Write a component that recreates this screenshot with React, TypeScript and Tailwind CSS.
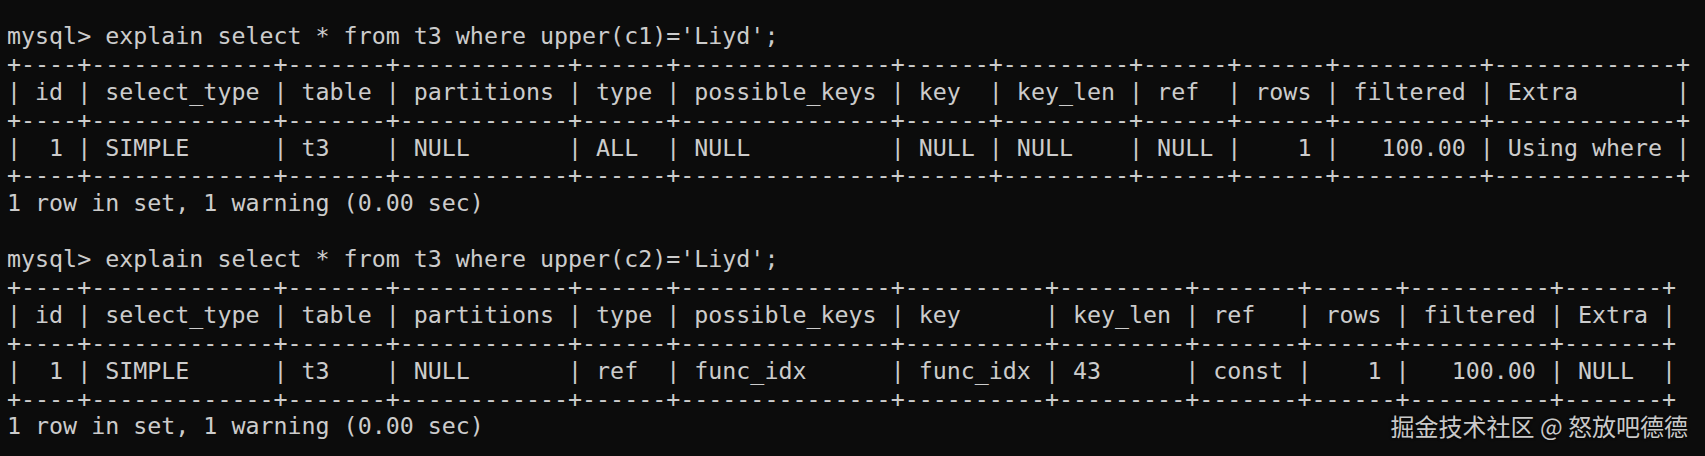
const border1 =
  "+----+-------------+-------+------------+------+---------------+------+---------+------+------+----------+-------------+";
const border2 =
  "+----+-------------+-------+------------+------+---------------+----------+---------+-------+------+----------+-------+";

const lines = [
  "mysql> explain select * from t3 where upper(c1)='Liyd';",
  border1,
  "| id | select_type | table | partitions | type | possible_keys | key  | key_len | ref  | rows | filtered | Extra       |",
  border1,
  "|  1 | SIMPLE      | t3    | NULL       | ALL  | NULL          | NULL | NULL    | NULL |    1 |   100.00 | Using where |",
  border1,
  "1 row in set, 1 warning (0.00 sec)",
  "",
  "mysql> explain select * from t3 where upper(c2)='Liyd';",
  border2,
  "| id | select_type | table | partitions | type | possible_keys | key      | key_len | ref   | rows | filtered | Extra |",
  border2,
  "|  1 | SIMPLE      | t3    | NULL       | ref  | func_idx      | func_idx | 43      | const |    1 |   100.00 | NULL  |",
  border2,
  "1 row in set, 1 warning (0.00 sec)",
];

export default function App() {
  return (
    <div className="relative h-[456px] w-full overflow-hidden bg-[#0c0c0c]">
      {/* terminal output */}
      <pre className="m-0 pl-[7px] pt-[22px] font-['DejaVu_Sans_Mono',monospace] text-[23.3px] leading-[27.9px] text-[#cccccc]">
        {lines.map((l, i) => (
          <div key={i} className="h-[27.9px] whitespace-pre">
            {l}
          </div>
        ))}
      </pre>

      {/* watermark */}
      <div className="absolute right-[17px] top-[412px] font-['Noto_Sans_CJK_SC',sans-serif] text-[24px] leading-[28px] text-[#c9c9c9] [text-shadow:0_0_3px_rgba(0,0,0,0.8)]">
        掘金技术社区 @ 怒放吧德德
      </div>
    </div>
  );
}
